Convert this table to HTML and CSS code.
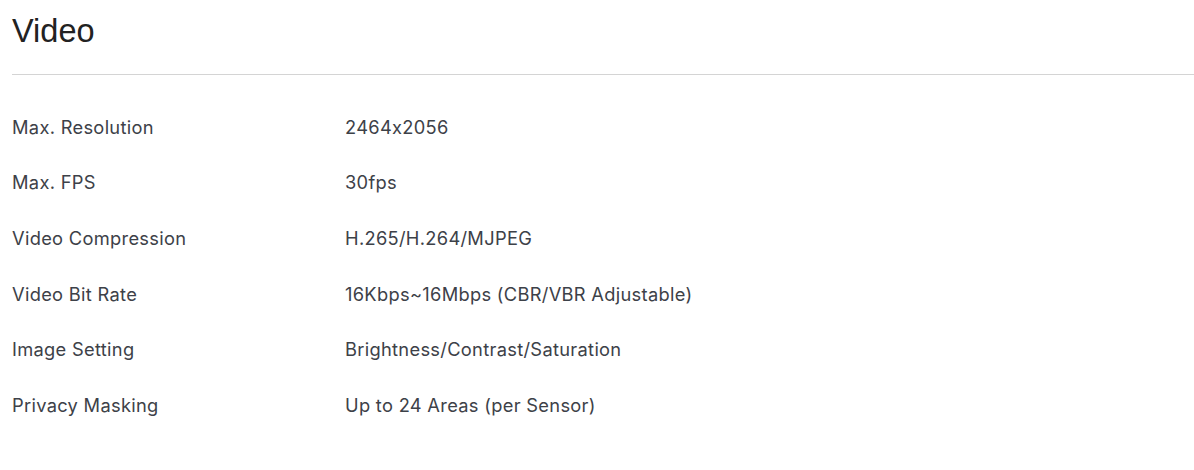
FILE: index.html
```html
<!DOCTYPE html>
<html>
<head>
<meta charset="utf-8">
<link rel="stylesheet" href="styles.css">
</head>
<body>
<section class="spec">
  <h2 class="spec-title">Video</h2>
  <div class="spec-list">
    <div class="spec-row"><div class="spec-key">Max. Resolution</div><div class="spec-val">2464x2056</div></div>
    <div class="spec-row"><div class="spec-key">Max. FPS</div><div class="spec-val">30fps</div></div>
    <div class="spec-row"><div class="spec-key">Video Compression</div><div class="spec-val">H.265/H.264/MJPEG</div></div>
    <div class="spec-row"><div class="spec-key">Video Bit Rate</div><div class="spec-val">16Kbps~16Mbps (CBR/VBR Adjustable)</div></div>
    <div class="spec-row"><div class="spec-key">Image Setting</div><div class="spec-val">Brightness/Contrast/Saturation</div></div>
    <div class="spec-row"><div class="spec-key">Privacy Masking</div><div class="spec-val">Up to 24 Areas (per Sensor)</div></div>
  </div>
</section>
</body>
</html>
```
FILE: styles.css
```css
html, body {
  margin: 0;
  padding: 0;
  background: #fff;
}
body {
  font-family: Inter, "Liberation Sans", sans-serif;
  font-feature-settings: "calt" 0;
  color: #333;
}
.spec {
  padding: 0 0 0 12px;
}
.spec-title {
  margin: 0;
  padding-top: 11px;
  height: 75px;
  box-sizing: border-box;
  border-bottom: 1px solid #d4d4d4;
  font-family: "Liberation Sans", Arial, sans-serif;
  font-weight: 400;
  font-size: 32.5px;
  line-height: 40px;
  color: #222;
}
.spec-list {
  padding-top: 24px;
}
.spec-row {
  display: flex;
  height: 55.6px;
  align-items: center;
}
.spec-key,
.spec-val {
  font-size: 18.3px;
  letter-spacing: 0.3px;
  color: #3d4148;
}
.spec-key {
  width: 333px;
}
```
